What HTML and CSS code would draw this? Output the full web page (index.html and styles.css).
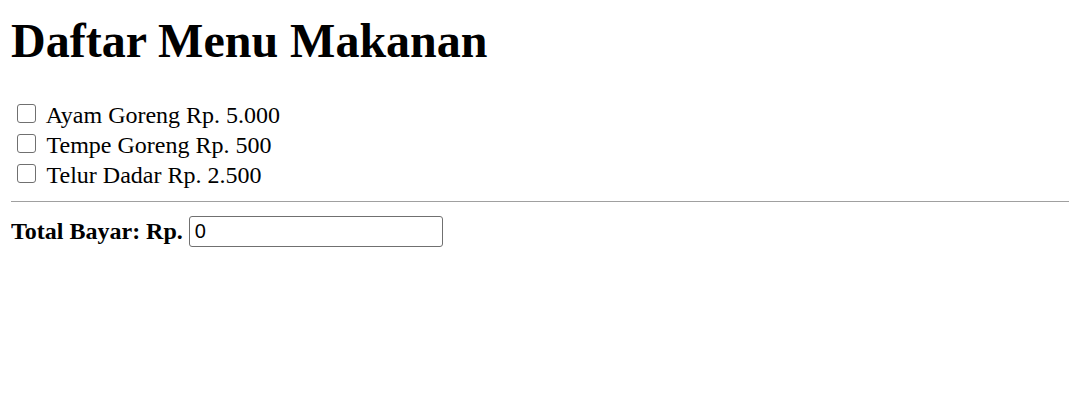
FILE: index.html
```html
<!DOCTYPE html>
<html lang="id">
<head>
<meta charset="utf-8">
<title>Daftar Menu Makanan</title>
<link rel="stylesheet" href="styles.css">
</head>
<body>
<h1 class="title">Daftar Menu Makanan</h1>
<form class="menu">
  <label class="item"><input type="checkbox" class="check" value="5000"> Ayam Goreng Rp. 5.000</label>
  <label class="item"><input type="checkbox" class="check" value="500"> Tempe Goreng Rp. 500</label>
  <label class="item"><input type="checkbox" class="check" value="2500"> Telur Dadar Rp. 2.500</label>
  <hr class="rule">
  <div class="total"><b class="total-label">Total Bayar: Rp.</b><input type="text" class="field" value="0"></div>
</form>
</body>
</html>
```
FILE: styles.css
```css
html, body { background: #fff; }
body {
  margin: 10px 9px 10px 11px;
  font-family: "Liberation Serif", "Times New Roman", serif;
  font-size: 24px;
  color: #000;
}
.title {
  font-size: 48px;
  font-weight: bold;
  margin: 3px 0 32px;
  line-height: 55px;
}
.menu { margin: 0; }
.item {
  display: flex;
  align-items: center;
  height: 30px;
  line-height: 27px;
  white-space: pre;
}
.check {
  appearance: none;
  -webkit-appearance: none;
  width: 19px;
  height: 19px;
  margin: 0 5px 3px 6px;
  border: 1px solid #707070;
  border-radius: 3px;
  background: #fff;
  box-sizing: border-box;
  flex: none;
}
.rule {
  border: 0;
  border-top: 1px solid #a0a0a0;
  margin: 11px 0 14px;
  height: 0;
}
.total {
  display: flex;
  align-items: center;
  height: 31px;
  line-height: 27px;
}
.total-label { margin-right: 6px; }
.field {
  width: 254px;
  height: 31px;
  box-sizing: border-box;
  border: 1px solid #707070;
  border-radius: 3px;
  padding: 0 5px;
  font-family: "Liberation Sans", Arial, sans-serif;
  font-size: 20px;
  color: #000;
  margin: 0;
  background: #fff;
}
```
